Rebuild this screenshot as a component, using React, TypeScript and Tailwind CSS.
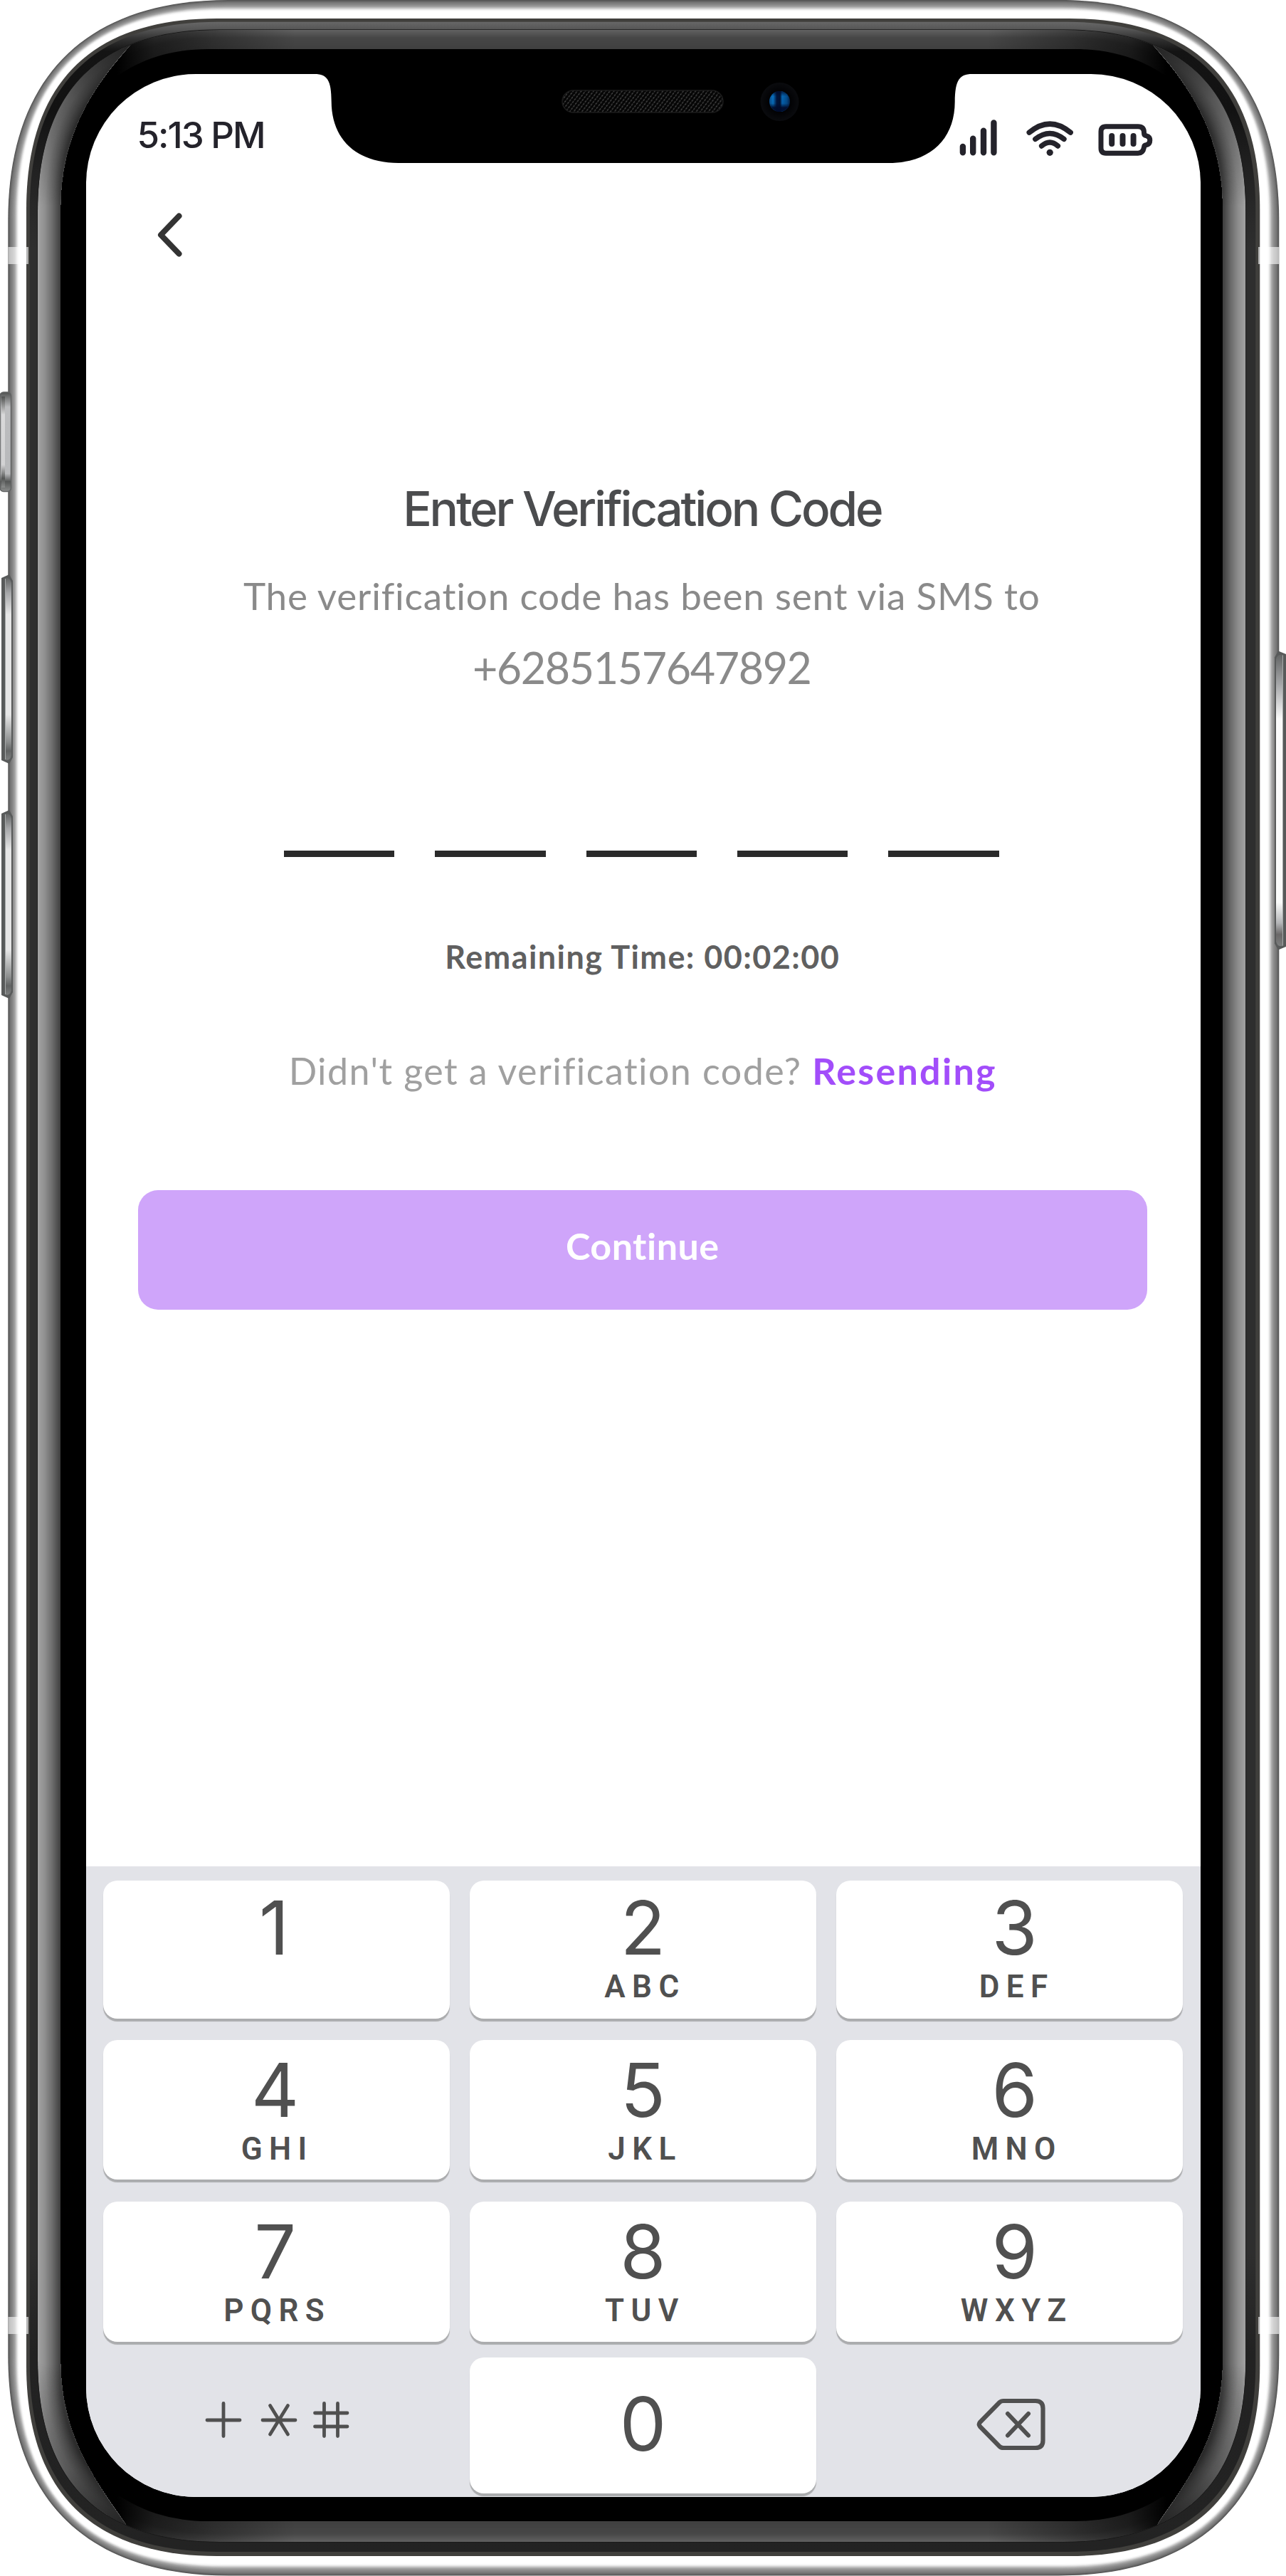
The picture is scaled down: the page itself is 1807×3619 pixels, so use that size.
import React from "react";

type Ring = { x0: number; y0: number; x1: number; y1: number; e: number; k: number };

/** Rounded rectangle with continuous corners: `e` is the corner extent, `k` the handle length. */
function ringPath({ x0, y0, x1, y1, e, k }: Ring) {
  const h = e * (1 - k);
  return [
    `M${x0} ${y0 + e}`,
    `C${x0} ${y0 + h} ${x0 + h} ${y0} ${x0 + e} ${y0}`,
    `H${x1 - e}`,
    `C${x1 - h} ${y0} ${x1} ${y0 + h} ${x1} ${y0 + e}`,
    `V${y1 - e}`,
    `C${x1} ${y1 - h} ${x1 - h} ${y1} ${x1 - e} ${y1}`,
    `H${x0 + e}`,
    `C${x0 + h} ${y1} ${x0} ${y1 - h} ${x0} ${y1 - e}`,
    "Z",
  ].join(" ");
}

const lerp = (a: number, b: number, t: number) => a + (b - a) * t;

function mix(a: Ring, b: Ring, t: number): Ring {
  return {
    x0: lerp(a.x0, b.x0, t),
    y0: lerp(a.y0, b.y0, t),
    x1: lerp(a.x1, b.x1, t),
    y1: lerp(a.y1, b.y1, t),
    e: lerp(a.e, b.e, t),
    k: lerp(a.k, b.k, t),
  };
}

function Bevel({ from, to, steps, stops }: { from: Ring; to: Ring; steps: number; stops: [number, number][] }) {
  const shade = (t: number) => {
    let i = 0;
    while (i < stops.length - 2 && stops[i + 1][0] < t) i++;
    const [t0, v0] = stops[i];
    const [t1, v1] = stops[i + 1];
    const v = Math.round(lerp(v0, v1, Math.min(1, Math.max(0, (t - t0) / (t1 - t0)))));
    return `rgb(${v},${v},${v})`;
  };
  return (
    <>
      {Array.from({ length: steps }, (_, i) => (
        <path key={i} d={ringPath(mix(from, to, i / steps))} fill={shade(i / steps)} />
      ))}
    </>
  );
}

const OUTER: Ring = { x0: 11.3, y0: 0, x1: 1797.3, y1: 3618.5, e: 310, k: 0.648 };
const RIM: Ring = { x0: 37, y0: 26, x1: 1770.3, y1: 3591, e: 268, k: 0.66 };
const GLASS: Ring = { x0: 53, y0: 42, x1: 1750.3, y1: 3571, e: 256, k: 0.667 };
const BEZEL: Ring = { x0: 85, y0: 69, x1: 1718, y1: 3542, e: 208, k: 0.6 };

function SideGlare() {
  return (
    <g clipPath="url(#side)">
      <Bevel from={GLASS} to={BEZEL} steps={32} stops={[[0, 162], [0.3, 143], [0.65, 105], [1, 60]]} />
      <path d="M40 40H200V320H40Z" fill="url(#fadeTop)" />
      <path d="M40 3290H200V3580H40Z" fill="url(#fadeBottom)" />
    </g>
  );
}

function SideButton({ x, y, w, h, flip, mid }: { x: number; y: number; w: number; h: number; flip?: boolean; mid: string }) {
  return (
    <g transform={flip ? `translate(${x + w} ${y}) scale(-1 1)` : `translate(${x} ${y})`}>
      <path d={`M0 5L${w - 4} 0L${w + 1} 9V${h - 9}L${w - 4} ${h}L0 ${h - 5}Z`} fill="#585a5a" />
      <path
        d={`M5 6Q${w - 3} 3 ${w - 1} 12V${h - 12}Q${w - 3} ${h - 3} 5 ${h - 6}Z`}
        fill={mid}
      />
      <rect x={5} y={6} width={1} height={h - 12} fill="#a5a8a8" />
    </g>
  );
}

function Hardware() {
  return (
    <svg className="pointer-events-none absolute inset-0" width="1807" height="3619" viewBox="0 0 1807 3619">
      <defs>
        <linearGradient id="gasket" gradientUnits="userSpaceOnUse" x1="0" y1="29" x2="0" y2="3591">
          <stop offset="0" stopColor="#6a6a6a" />
          <stop offset="0.0035" stopColor="#555" />
          <stop offset="0.007" stopColor="#333" />
          <stop offset="0.012" stopColor="#141414" />
          <stop offset="0.035" stopColor="#121212" />
          <stop offset="0.06" stopColor="#222" />
          <stop offset="0.09" stopColor="#2e2e2e" />
          <stop offset="0.88" stopColor="#2e2e2e" />
          <stop offset="0.92" stopColor="#222" />
          <stop offset="1" stopColor="#232323" />
        </linearGradient>
        <linearGradient id="fadeTop" gradientUnits="userSpaceOnUse" x1="0" y1="60" x2="0" y2="290">
          <stop offset="0" stopOpacity="0.8" />
          <stop offset="0.35" stopOpacity="0.42" />
          <stop offset="1" stopOpacity="0" />
        </linearGradient>
        <linearGradient id="fadeBottom" gradientUnits="userSpaceOnUse" x1="0" y1="3550" x2="0" y2="3320">
          <stop offset="0" stopOpacity="0.8" />
          <stop offset="0.35" stopOpacity="0.42" />
          <stop offset="1" stopOpacity="0" />
        </linearGradient>
        <linearGradient id="fadeEnds" gradientUnits="userSpaceOnUse" x1="165" y1="0" x2="1638" y2="0">
          <stop offset="0" stopOpacity="1" />
          <stop offset="0.035" stopOpacity="0.6" />
          <stop offset="0.09" stopOpacity="0.32" />
          <stop offset="0.17" stopOpacity="0" />
          <stop offset="0.83" stopOpacity="0" />
          <stop offset="0.91" stopOpacity="0.32" />
          <stop offset="0.965" stopOpacity="0.6" />
          <stop offset="1" stopOpacity="1" />
        </linearGradient>
        <linearGradient id="key" x1="0" y1="0" x2="0" y2="1">
          <stop offset="0" stopColor="#636565" />
          <stop offset="0.08" stopColor="#a5a6a8" />
          <stop offset="0.2" stopColor="#e6e6e6" />
          <stop offset="0.75" stopColor="#e6e6e6" />
          <stop offset="0.9" stopColor="#8c8e8e" />
          <stop offset="0.95" stopColor="#616363" />
          <stop offset="1" stopColor="#7c7e7e" />
        </linearGradient>
        <linearGradient id="power" x1="0" y1="0" x2="0" y2="1">
          <stop offset="0" stopColor="#636565" />
          <stop offset="0.1" stopColor="#a5a6a8" />
          <stop offset="0.22" stopColor="#fafafa" />
          <stop offset="0.85" stopColor="#fafbfa" />
          <stop offset="0.92" stopColor="#b5b6b8" />
          <stop offset="0.96" stopColor="#6a6868" />
          <stop offset="1" stopColor="#7c7e7e" />
        </linearGradient>
        <linearGradient id="mute" x1="0" y1="0" x2="0" y2="1">
          <stop offset="0" stopColor="#4f5150" />
          <stop offset="0.15" stopColor="#bcbdbf" />
          <stop offset="0.82" stopColor="#b8b9bb" />
          <stop offset="0.9" stopColor="#555756" />
          <stop offset="1" stopColor="#8b8d8c" />
        </linearGradient>
        <linearGradient id="muteEdge" x1="0" y1="0" x2="0" y2="1">
          <stop offset="0" stopColor="#4f5150" />
          <stop offset="0.2" stopColor="#d9d9da" />
          <stop offset="0.75" stopColor="#d2d2d3" />
          <stop offset="0.9" stopColor="#555756" />
          <stop offset="1" stopColor="#8b8d8c" />
        </linearGradient>
        <clipPath id="glass">
          <path d={ringPath(GLASS)} />
        </clipPath>
        <clipPath id="side">
          <path d="M0 50H195L180 67C140 112 86 180 85 290V3320C87 3420 130 3480 176 3545L190 3575H0Z" />
        </clipPath>
        <clipPath id="ends">
          <path d="M120 40H1683V135H120ZM120 3478H1683V3575H120Z" />
        </clipPath>
      </defs>

      <Bevel
        from={OUTER}
        to={RIM}
        steps={36}
        stops={[[0, 84], [0.12, 118], [0.25, 138], [0.36, 165], [0.45, 208], [0.53, 244], [0.6, 255], [1, 255]]}
      />
      <path d={ringPath(RIM)} fill="#403f3c" />
      <path d={ringPath(mix(RIM, GLASS, 0.3))} fill="url(#gasket)" />
      <path d={ringPath(GLASS)} fill="#000" stroke="#1a1a1a" strokeWidth="1.5" />
      <g clipPath="url(#glass)">
        <g clipPath="url(#ends)">
          <Bevel from={GLASS} to={BEZEL} steps={27} stops={[[0, 96], [0.4, 70], [1, 64]]} />
          <rect x="120" y="40" width="1563" height="3540" fill="url(#fadeEnds)" />
        </g>
        <path d={ringPath(BEZEL)} fill="#000" />
        <SideGlare />
        <g transform="translate(1803.3 0) scale(-1 1)">
          <SideGlare />
        </g>
      </g>

      <g fill="#fff" fillOpacity="0.6">
        <rect x="11.5" y="347" width="28.5" height="24" />
        <rect x="1768" y="347" width="29.3" height="24" />
        <rect x="11.5" y="3255" width="28.5" height="24" />
        <rect x="1768" y="3255" width="29.3" height="24" />
      </g>

      <rect x="0" y="551" width="15.5" height="139.5" rx="5" fill="url(#mute)" stroke="#606262" strokeWidth="1.5" />
      <rect x="2" y="557" width="5" height="128" fill="url(#muteEdge)" />
      <SideButton x={2} y={807} w={15} h={266} mid="url(#key)" />
      <SideButton x={2} y={1138} w={15} h={265} mid="url(#key)" />
      <SideButton x={1792} y={914.5} w={16} h={420} mid="url(#power)" flip />
    </svg>
  );
}

function Notch() {
  return (
    <svg className="absolute left-[430px] top-[100px]" width="950" height="132" viewBox="430 100 950 132">
      <defs>
        <linearGradient id="lens" x1="0" y1="0" x2="1" y2="0">
          <stop offset="0" stopColor="#0a4c88" />
          <stop offset="0.18" stopColor="#0873c4" />
          <stop offset="0.36" stopColor="#01143c" />
          <stop offset="0.52" stopColor="#01102f" />
          <stop offset="0.62" stopColor="#0567b5" />
          <stop offset="0.85" stopColor="#054d8d" />
          <stop offset="1" stopColor="#02234b" />
        </linearGradient>
        <linearGradient id="lensShade" x1="0" y1="0" x2="0" y2="1">
          <stop offset="0" stopColor="#000b2b" stopOpacity="0.85" />
          <stop offset="0.25" stopColor="#000b2b" stopOpacity="0" />
          <stop offset="0.6" stopColor="#000b2b" stopOpacity="0.1" />
          <stop offset="0.8" stopColor="#000b2b" stopOpacity="0.95" />
        </linearGradient>
        <radialGradient id="lensRing">
          <stop offset="0.5" stopColor="#010103" />
          <stop offset="1" stopColor="#0a0b0e" />
        </radialGradient>
        <pattern id="mesh" width="7" height="6" patternUnits="userSpaceOnUse" patternTransform="rotate(-12)">
          <rect width="7" height="6" fill="#050505" />
          <path d="M0.5 2.5L3 0.5M4 5.5L6.5 3.5" stroke="#4a4a4a" strokeWidth="1.3" />
        </pattern>
      </defs>
      <path
        d="M430 100V103.7H440C460 103.7 465.6 112 465.7 143C466 195 500 229 560 229H1248C1308 229 1341.5 195 1341.7 143C1342 112 1348 103.7 1368 103.7H1380V100Z"
        fill="#000"
      />
      <rect x="790" y="127" width="226" height="31" rx="15.5" fill="url(#mesh)" stroke="#1b1b1b" strokeWidth="1.5" />
      <circle cx="1095.5" cy="143" r="27" fill="url(#lensRing)" />
      <circle cx="1095.5" cy="142.5" r="14.5" fill="url(#lens)" />
      <circle cx="1095.5" cy="142.5" r="14.5" fill="url(#lensShade)" />
    </svg>
  );
}

function StatusIcons() {
  return (
    <svg width="290" height="60" viewBox="1340 159 290 60" fill="none" stroke="#24232b" strokeLinecap="round">
      <g strokeWidth="8.4">
        <path d="M1352.9 206V214.2M1367.2 194.6V214.2M1382 183.6V214.2M1396.4 172.4V214.2" />
      </g>
      <g strokeWidth="7.4">
        <path d="M1446.2 186.2Q1475.2 162 1504.2 186.2" />
        <path d="M1454.8 195.4Q1475.2 179.5 1495 195.4" />
        <path d="M1463.6 205Q1475.2 195 1486.4 205" />
      </g>
      <circle cx="1475.2" cy="214.3" r="4.6" fill="#24232b" stroke="none" />
      <path
        d="M1554 177.8H1599Q1607.5 178 1607.5 186V187Q1607.5 190.5 1611 190.8Q1615.8 192 1615.8 197Q1615.8 202.5 1611 203.5Q1607.5 203.8 1607.5 207Q1606 215.2 1599 215.2H1554Q1547 215.2 1547 208V185Q1547 177.8 1554 177.8Z"
        strokeWidth="7"
        strokeLinejoin="round"
      />
      <path d="M1562.2 191V202M1577.5 191V202M1592.6 191V202" strokeWidth="8" />
    </svg>
  );
}

function Backspace() {
  return (
    <svg width="100" height="76" viewBox="0 0 100 76" fill="none" stroke="#505050" strokeLinecap="round" strokeLinejoin="round">
      <path
        d="M39 5H84Q94.5 5 94.5 15.5V60.5Q94.5 71 84 71H39Q35.5 71 33.5 69L6 41Q3.5 38 6 35L33.5 7Q35.5 5 39 5Z"
        strokeWidth="6.2"
      />
      <path d="M45 23L74 53.5M74 23L45 53.5" strokeWidth="6" />
    </svg>
  );
}

function Symbols() {
  return (
    <svg width="206" height="56" viewBox="287 3372 206 56" fill="none" stroke="#505050" strokeWidth="4.8" strokeLinecap="round">
      <path d="M291 3400H337M314 3376.5V3422.5" />
      <path d="M369 3400H415M379.5 3379.5L404.5 3420M404.5 3379.5L379.5 3420" />
      <path d="M442.5 3390H488M442.5 3409H488M455.5 3376.5V3422.5M474.5 3376.5V3422.5" />
    </svg>
  );
}

const KEY = "flex w-[487.3px] flex-col items-center rounded-[20px] bg-white shadow-[0_4px_1px_#abacae]";

function Key({ digit, letters }: { digit: string; letters?: string }) {
  return (
    <>
      <span className="font-[Inter] text-[104px] leading-[110px] text-[#505050]">{digit}</span>
      {letters && (
        <span className="mt-[3px] pl-[6px] font-[Roboto] text-[44px] font-semibold leading-[50px] tracking-[9.4px] text-[#505050]">
          {letters}
        </span>
      )}
    </>
  );
}

function Keyboard() {
  return (
    <div className="mt-auto flex h-[885.7px] flex-col bg-[#e2e3e8] pl-[24.5px] pt-[20px]">
      <div className="flex h-[194px] gap-[27.5px]">
        <div className={`${KEY} pr-[7px] pt-[11px]`}><Key digit="1" /></div>
        <div className={`${KEY} pt-[11px]`}><Key digit="2" letters="ABC" /></div>
        <div className={`${KEY} pl-[15px] pt-[11px]`}><Key digit="3" letters="DEF" /></div>
      </div>
      <div className="mt-[30px] flex h-[196px] gap-[27.5px]">
        <div className={`${KEY} pr-[4px] pt-[15px]`}><Key digit="4" letters="GHI" /></div>
        <div className={`${KEY} pt-[15px]`}><Key digit="5" letters="JKL" /></div>
        <div className={`${KEY} pl-[15px] pt-[15px]`}><Key digit="6" letters="MNO" /></div>
      </div>
      <div className="mt-[31px] flex h-[197px] gap-[27.5px]">
        <div className={`${KEY} pr-[4px] pt-[15px]`}><Key digit="7" letters="PQRS" /></div>
        <div className={`${KEY} pt-[15px]`}><Key digit="8" letters="TUV" /></div>
        <div className={`${KEY} pl-[15px] pt-[15px]`}><Key digit="9" letters="WXYZ" /></div>
      </div>
      <div className="mt-[22px] flex h-[191px] gap-[27.5px]">
        <div className="flex w-[487.3px] justify-center pl-[3px] pt-[60px]"><Symbols /></div>
        <div className={`${KEY} pt-[38px]`}><Key digit="0" /></div>
        <div className="flex w-[487.3px] justify-center pl-[5px] pt-[56px]"><Backspace /></div>
      </div>
    </div>
  );
}

export default function App() {
  return (
    <div className="relative h-[3619px] w-[1807px] overflow-hidden bg-white pl-[120.5px] pt-[103.7px]">
      <Hardware />
      <div className="relative flex h-[3404px] w-[1566.5px] flex-col overflow-hidden rounded-[154px] bg-white">
        <div className="flex h-[115.3px] items-end justify-between pl-[72px] pr-[57px]">
          <span className="whitespace-nowrap pt-[3px] font-[Inter] text-[51px] font-medium leading-[58px] tracking-[-2px] text-[#24232b]">
            5:13 PM
          </span>
          <StatusIcons />
        </div>
        <button className="ml-[89px] mt-[71px] h-[80px] w-[60px]" aria-label="Back">
          <svg width="60" height="80" viewBox="210 290 60 80" fill="none" stroke="#333" strokeWidth="8" strokeLinecap="round" strokeLinejoin="round">
            <path d="M251.5 303.5L226 330L251.5 356.5" />
          </svg>
        </button>

        <div className="flex flex-col items-center whitespace-nowrap">
          <h1 className="mt-[305px] pr-[3px] font-[Inter] text-[67.4px] font-medium leading-[80px] tracking-[-3.2px] text-[#4b4c4e]">
            Enter Verification Code
          </h1>
          <p className="mt-[50px] pr-[4px] font-[Lato] text-[53px] leading-[64px] tracking-[0.8px] text-[#8a8a8a]">
            The verification code has been sent via SMS to
          </p>
          <p className="mt-[33px] pr-[4px] font-[Lato] text-[61px] leading-[72px] tracking-[-1.4px] text-[#8a8a8a]">+6285157647892</p>
          <div className="mt-[221.1px] flex gap-[56.8px] pr-[5px]">
            {[0, 1, 2, 3, 4].map((i) => (
              <span key={i} className="h-[8.5px] w-[155.5px] bg-[#2a2a2a]" />
            ))}
          </div>
          <p className="mt-[112px] pr-[2px] font-[Lato] text-[45px] font-bold leading-[56px] tracking-[1.4px] text-[#606060]">
            Remaining Time: 00:02:00
          </p>
          <p className="mt-[100.5px] pr-[1px] font-[Lato] text-[52px] leading-[64px] tracking-[1.42px] text-[#a0a0a0]">
            Didn't get a verification code? <span className="font-bold tracking-[2.3px] text-[#a24dfa]">Resending</span>
          </p>
        </div>

        <button className="ml-[73.5px] mt-[135.5px] h-[168px] w-[1417.5px] rounded-[28px] bg-[#cfa5fa] pb-[12px] font-[Lato] text-[52px] font-bold tracking-[0.5px] text-white">
          Continue
        </button>

        <Keyboard />
      </div>
      <Notch />
    </div>
  );
}
